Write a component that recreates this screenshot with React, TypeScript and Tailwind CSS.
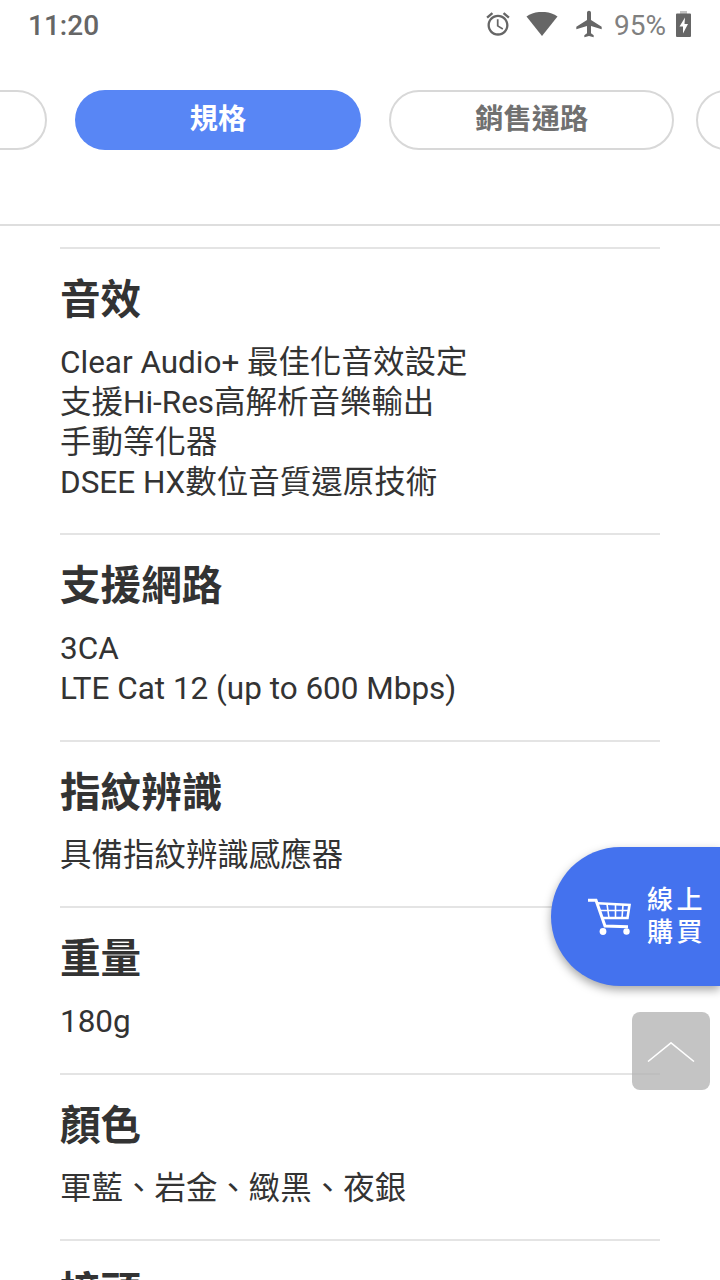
import React from 'react';

interface Spec {
  title: string;
  lines: string[];
}

const specs: Spec[] = [
  {
    title: '音效',
    lines: [
      'Clear Audio+ 最佳化音效設定',
      '支援Hi-Res高解析音樂輸出',
      '手動等化器',
      'DSEE HX數位音質還原技術',
    ],
  },
  { title: '支援網路', lines: ['3CA', 'LTE Cat 12 (up to 600 Mbps)'] },
  { title: '指紋辨識', lines: ['具備指紋辨識感應器'] },
  { title: '重量', lines: ['180g'] },
  { title: '顏色', lines: ['軍藍、岩金、緻黑、夜銀'] },
  { title: '接頭', lines: [] },
];

const StatusBar: React.FC = () => (
  <div className="flex h-[50px] shrink-0 items-center justify-between pr-[29px] pl-[28px] text-[#666666]">
    <span className="pt-px text-[28px] leading-[50px] font-medium">11:20</span>
    <div className="flex items-center">
      <svg className="-mt-[2px] h-[28px] w-[28px]" viewBox="0 0 24 24" fill="currentColor">
        <path d="M22 5.72l-4.6-3.86-1.29 1.53 4.6 3.86L22 5.72zM7.88 3.39L6.6 1.86 2 5.71l1.29 1.53 4.59-3.85zM12.5 8H11v6l4.75 2.85.75-1.23-4-2.37V8zM12 4c-4.97 0-9 4.03-9 9s4.02 9 9 9c4.97 0 9-4.03 9-9s-4.03-9-9-9zm0 16c-3.87 0-7-3.13-7-7s3.13-7 7-7 7 3.13 7 7-3.13 7-7 7z" />
      </svg>
      <svg className="-mt-[3px] ml-[14px] h-[24px] w-[32px]" viewBox="0 0 32 24" fill="currentColor">
        <path d="M0.5 4.5C9 -1.7 23 -1.7 31.5 4.5L16 24Z" />
      </svg>
      <svg className="-mt-[2px] ml-[15px] h-[32px] w-[32px]" viewBox="0 0 24 24" fill="currentColor">
        <path d="M21.500 16v-2l-8-5V3.500c0-.83-.67-1.500-1.500-1.500s-1.500.67-1.500 1.500V9l-8 5v2l8-2.500V19l-2 1.500V22l3.500-1 3.500 1v-1.500L13.500 19v-5.500l8 2.500z" />
      </svg>
      <span className="ml-[9px] pt-px text-[28px] leading-[50px] text-[#808080]">95%</span>
      <svg className="-mt-[2px] ml-[10px] h-[26px] w-[15px]" viewBox="0 0 15 26">
        <path d="M4 0h7v3H4z" fill="#c4c4c4" />
        <path d="M1 2.500h13a1 1 0 0 1 1 1V25a1 1 0 0 1-1 1H1a1 1 0 0 1-1-1V3.500a1 1 0 0 1 1-1z" fill="#666666" />
        <path d="M9 6.500L3.500 15.500h3.500V22.500L12 13H8.500z" fill="#ffffff" />
      </svg>
    </div>
  </div>
);

const TabBar: React.FC = () => (
  <nav className="flex h-[176px] shrink-0 overflow-hidden border-b-2 border-[#dedede] pt-[40px] text-[28.2px] leading-[54px] font-bold">
    <div className="-ml-[240px] h-[60px] w-[286.5px] shrink-0 rounded-full border-2 border-[#d8d8d8]" />
    <button className="ml-[28px] h-[60px] w-[286px] shrink-0 rounded-full bg-[#5886f5] pb-px pl-px text-white">規格</button>
    <button className="ml-[28px] h-[60px] w-[285.5px] shrink-0 rounded-full border-2 border-[#d8d8d8] pb-px pl-px text-[#707070]">
      銷售通路
    </button>
    <div className="ml-[22px] h-[60px] w-[286px] shrink-0 rounded-full border-2 border-[#d8d8d8]" />
  </nav>
);

const SpecSection: React.FC<{ spec: Spec }> = ({ spec }) => (
  <section className="border-t-2 border-[#e4e4e4] pt-[21px] pb-[30.5px]">
    <h2 className="mb-[13px] text-[40.6px] leading-[60px] font-bold">{spec.title}</h2>
    {spec.lines.map((line) => (
      <p key={line} className="text-[31.47px] leading-10 whitespace-nowrap">
        {line}
      </p>
    ))}
  </section>
);

const BuyButton: React.FC = () => (
  <button className="absolute top-[847px] right-0 flex h-[139px] w-[169px] items-center rounded-l-full bg-[#4472ee] pl-[37px] text-white shadow-[0_4px_10px_rgba(0,0,0,0.35)]">
    <svg className="h-[38px] w-[44px]" viewBox="0 0 44 38" fill="none" stroke="currentColor">
      <path d="M0 2.300h8L17 28L40 28.800" strokeWidth="3" />
      <path d="M9.500 5.300L41.500 7L39.500 20H14.500" strokeWidth="2.600" />
      <path d="M12 12.500H41M19 6L21 20M27.500 6.500V20M35 7L34 20" strokeWidth="1.600" />
      <circle cx="15" cy="33.500" r="3.400" fill="currentColor" stroke="none" />
      <circle cx="38.500" cy="33.500" r="3.200" fill="currentColor" stroke="none" />
    </svg>
    <span className="-mt-[2px] ml-[15px] flex flex-col text-[26px] leading-[32px] font-medium tracking-[3.5px] whitespace-nowrap">
      <span>線上</span>
      <span>購買</span>
    </span>
  </button>
);

const BackToTop: React.FC = () => (
  <button className="absolute top-[1012px] right-[10px] flex h-[78px] w-[78px] items-center justify-center rounded-lg bg-[#b4b4b4]/78">
    <svg className="mt-px h-[20px] w-[48px]" viewBox="0 0 48 20" fill="none" stroke="#ffffff" strokeWidth="1.500">
      <path d="M1 19.500L24 0.800L47 19.500" />
    </svg>
  </button>
);

const App: React.FC = () => {
  return (
    <div
      lang="zh-TW"
      className="relative flex h-[1280px] w-[720px] flex-col overflow-hidden bg-white font-[Roboto,'Noto_Sans_CJK_TC',sans-serif] text-[#333333]"
    >
      <StatusBar />
      <TabBar />
      <main className="min-h-0 flex-1 overflow-hidden px-[60px] pt-[20.6px]">
        {specs.map((spec) => (
          <SpecSection key={spec.title} spec={spec} />
        ))}
      </main>
      <BuyButton />
      <BackToTop />
    </div>
  );
};

export default App;
